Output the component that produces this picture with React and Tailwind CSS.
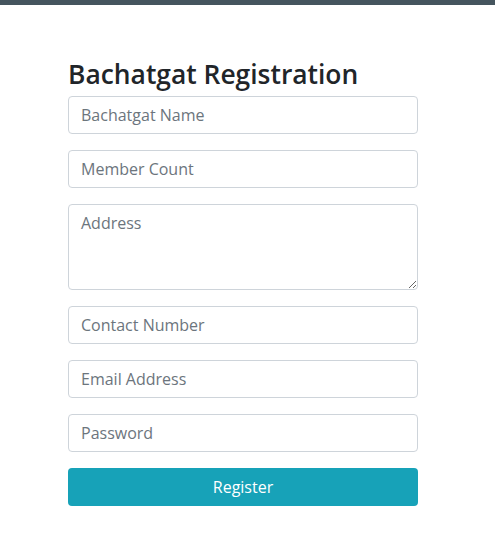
export default function App() {
  const field =
    "w-full h-[38px] px-3 rounded border border-[#ced4da] text-base text-[#495057] placeholder:text-[#6c757d] bg-white outline-none";

  return (
    <div className="min-h-[545px] bg-white font-['Open_Sans','Noto_Sans',sans-serif]">
      <div className="h-[5px] bg-[#45555e]" />
      <div className="w-[350px] ml-[68px] pt-[51px]">
        <h2 className="text-[26.4px] leading-[36px] font-semibold text-[#212529] mb-[4px]">
          Bachatgat Registration
        </h2>
        <form className="flex flex-col gap-4" onSubmit={(e) => e.preventDefault()}>
          <input className={field} placeholder="Bachatgat Name" />
          <input className={field} placeholder="Member Count" />
          <textarea
            className="w-full h-[86px] px-3 py-[6px] rounded border border-[#ced4da] text-base text-[#495057] placeholder:text-[#6c757d] outline-none"
            placeholder="Address"
          />
          <input className={field} placeholder="Contact Number" />
          <input className={field} placeholder="Email Address" />
          <input className={field} type="password" placeholder="Password" />
          <button className="w-full h-[38px] rounded bg-[#17a2b8] text-white text-base">
            Register
          </button>
        </form>
      </div>
    </div>
  );
}
